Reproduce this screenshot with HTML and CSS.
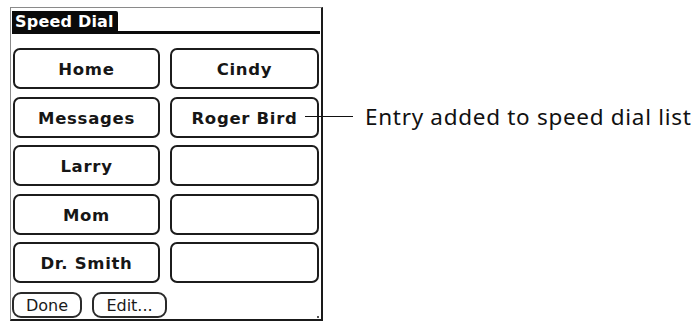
FILE: index.html
```html
<!DOCTYPE html>
<html>
<head>
<meta charset="utf-8">
<link rel="stylesheet" href="styles.css">
</head>
<body>
<div class="page">
  <div class="device">
    <div class="header">
      <div class="tab">Speed Dial</div>
      <div class="rule"></div>
    </div>
    <div class="grid">
      <div class="btn">Home</div>
      <div class="btn">Cindy</div>
      <div class="btn">Messages</div>
      <div class="btn">Roger Bird</div>
      <div class="btn">Larry</div>
      <div class="btn"></div>
      <div class="btn">Mom</div>
      <div class="btn"></div>
      <div class="btn">Dr. Smith</div>
      <div class="btn"></div>
    </div>
    <div class="footer">
      <div class="sbtn done">Done</div>
      <div class="sbtn edit">Edit...</div>
      <div class="dot"></div>
    </div>
  </div>
  <div class="callout">
    <div class="leader"></div>
    <div class="label">Entry added to speed dial list</div>
  </div>
</div>
</body>
</html>
```

FILE: styles.css
```css
html, body {
  margin: 0;
  padding: 0;
  background: #ffffff;
}

.page {
  position: relative;
  width: 696px;
  height: 322px;
  padding: 7px 0 0 10px;
  box-sizing: border-box;
}

.device {
  width: 313px;
  height: 314px;
  box-sizing: border-box;
  border-top: 1px solid #8a8a8a;
  border-left: 1px solid #8a8a8a;
  border-right: 2px solid #1a1a1a;
  border-bottom: 2px solid #1a1a1a;
  display: flex;
  flex-direction: column;
}

.header {
  display: flex;
  align-items: flex-end;
  margin: 3px 1px 0 1px;
  height: 23px;
}

.tab {
  width: 106px;
  height: 23px;
  background: #0a0a0a;
  color: #ffffff;
  font-family: "DejaVu Sans", sans-serif;
  font-weight: bold;
  font-size: 16px;
  letter-spacing: 0.2px;
  line-height: 21px;
  padding-left: 3px;
  box-sizing: border-box;
  border-top-right-radius: 2px;
  white-space: nowrap;
}

.rule {
  flex: 1;
  height: 3px;
  background: #0a0a0a;
}

.grid {
  display: grid;
  grid-template-columns: 147px 149px;
  grid-auto-rows: 41px;
  column-gap: 10px;
  row-gap: 7.5px;
  margin: 14px 0 0 2px;
}

.btn {
  border: 2px solid #1c1c1c;
  border-radius: 7px;
  box-sizing: border-box;
  display: flex;
  align-items: center;
  justify-content: center;
  padding-top: 2px;
  font-family: "DejaVu Sans", sans-serif;
  font-weight: bold;
  font-size: 16.5px;
  letter-spacing: 0.7px;
  color: #161616;
}

.footer {
  display: flex;
  align-items: flex-start;
  margin: 9px 1px 0 1px;
  height: 26px;
}

.sbtn {
  height: 26px;
  border: 2px solid #2a2a2a;
  border-radius: 9px;
  box-sizing: border-box;
  display: flex;
  align-items: center;
  justify-content: center;
  font-family: "DejaVu Sans", sans-serif;
  font-size: 16px;
  color: #1a1a1a;
}

.done {
  width: 70px;
}

.edit {
  width: 75px;
  margin-left: 10px;
}

.dot {
  width: 2px;
  height: 2px;
  background: #555;
  margin-left: auto;
  margin-right: 1px;
  align-self: flex-end;
}

.callout {
  position: absolute;
  left: 305px;
  top: 104px;
  height: 24px;
  display: flex;
  align-items: center;
}

.leader {
  width: 48px;
  height: 1px;
  background: #111;
}

.label {
  margin-left: 12px;
  font-family: "Noto Sans", sans-serif;
  font-size: 22.5px;
  letter-spacing: 0.7px;
  color: #111;
  white-space: nowrap;
}
```
